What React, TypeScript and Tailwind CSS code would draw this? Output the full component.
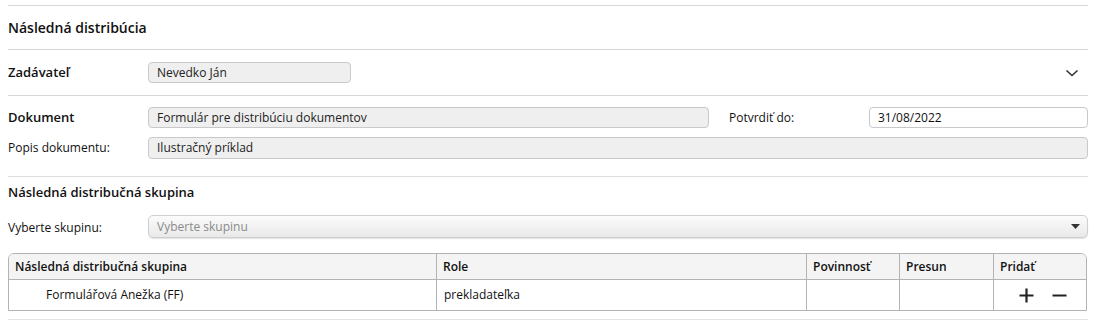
import React from "react";

const font = { fontFamily: '"Open Sans", "Liberation Sans", sans-serif' };

function Input({ value, className = "" }: { value: string; className?: string }) {
  return (
    <div
      className={`h-[21px] flex items-center rounded-[4px] border border-[#c9c9c9] bg-[#efefef] pl-[8px] text-[12px] text-[#222] ${className}`}
    >
      {value}
    </div>
  );
}

export default function App() {
  return (
    <div className="w-[1094px] h-[325px] bg-white pl-[8px] pr-[6px] pt-[5px] text-[#111]" style={font}>
      <div className="border-t border-[#d6d6d6] h-[44px] flex items-center">
        <span className="text-[14px] font-semibold">Následná distribúcia</span>
      </div>
      <div className="border-t border-[#d6d6d6] h-[46px] flex items-center">
        <span className="w-[140px] text-[13px] font-semibold">Zadávateľ</span>
        <Input value="Nevedko Ján" className="w-[203px]" />
        <div className="flex-1" />
        <svg width="14" height="8" viewBox="0 0 14 8" className="mr-[9px]">
          <path d="M1.5 1.5 L7 6.5 L12.5 1.5" fill="none" stroke="#333" strokeWidth="1.6" />
        </svg>
      </div>
      <div className="border-t border-[#d6d6d6] pt-[11px] h-[81px]">
        <div className="flex items-center h-[21px]">
          <span className="w-[140px] text-[13px] font-semibold">Dokument</span>
          <Input value="Formulár pre distribúciu dokumentov" className="w-[561px]" />
          <span className="ml-[20px] w-[140px] text-[12px]">Potvrdiť do:</span>
          <div className="flex-1 h-[21px] flex items-center rounded-[4px] border border-[#c9c9c9] bg-white pl-[8px] text-[12px]">
            31/08/2022
          </div>
        </div>
        <div className="flex items-center h-[22px] mt-[9px]">
          <span className="w-[140px] text-[12px]">Popis dokumentu:</span>
          <Input value="Ilustračný príklad" className="flex-1 h-[22px]" />
        </div>
      </div>
      <div className="border-t border-[#dedede] pt-[7px]">
        <div className="h-[18px] flex items-center text-[13px] font-semibold">Následná distribučná skupina</div>
        <div className="flex items-center mt-[13px] h-[23px]">
          <span className="w-[140px] text-[12px] pt-[3px]">Vyberte skupinu:</span>
          <div className="flex-1 h-[23px] flex items-center justify-between rounded-[5px] border border-[#cfcfcf] bg-gradient-to-b from-[#fbfbfb] to-[#e9e9e9] pl-[8px] pr-[7px] text-[12px] text-[#8a8a8a] shadow-[0_1px_1px_rgba(0,0,0,0.12)]">
            <span>Vyberte skupinu</span>
            <svg width="9" height="5" viewBox="0 0 9 5">
              <path d="M0 0 L9 0 L4.5 5 Z" fill="#333" />
            </svg>
          </div>
        </div>
        <div className="mt-[15px] mr-[1px] border border-[#b3b3b3] rounded-t-[6px] overflow-hidden text-[12px]">
          <div className="grid grid-cols-[427px_370px_93px_94px_1fr] h-[26px] bg-[#f4f4f4] border-b border-[#b3b3b3] font-semibold">
            <div className="flex items-center pl-[6px]">Následná distribučná skupina</div>
            <div className="flex items-center pl-[6px] border-l border-[#b3b3b3]">Role</div>
            <div className="flex items-center pl-[6px] border-l border-[#b3b3b3]">Povinnosť</div>
            <div className="flex items-center pl-[6px] border-l border-[#b3b3b3]">Presun</div>
            <div className="flex items-center pl-[6px] border-l border-[#b3b3b3]">Pridať</div>
          </div>
          <div className="grid grid-cols-[427px_370px_93px_94px_1fr] h-[30px]">
            <div className="flex items-center pl-[37px]">Formulářová Anežka (FF)</div>
            <div className="flex items-center pl-[7px] border-l border-[#b3b3b3]">prekladateľka</div>
            <div className="border-l border-[#b3b3b3]" />
            <div className="border-l border-[#b3b3b3]" />
            <div className="flex items-center border-l border-[#b3b3b3] pl-[25px] gap-[18px]">
              <svg width="15" height="15" viewBox="0 0 15 15">
                <path d="M7.5 0.5 V14.5 M0.5 7.5 H14.5" stroke="#222" strokeWidth="2.2" />
              </svg>
              <svg width="15" height="15" viewBox="0 0 15 15">
                <path d="M0.5 7.5 H14.5" stroke="#222" strokeWidth="2.2" />
              </svg>
            </div>
          </div>
        </div>
        <div className="mt-[8px] border-t border-[#e3e3e3]" />
      </div>
    </div>
  );
}
